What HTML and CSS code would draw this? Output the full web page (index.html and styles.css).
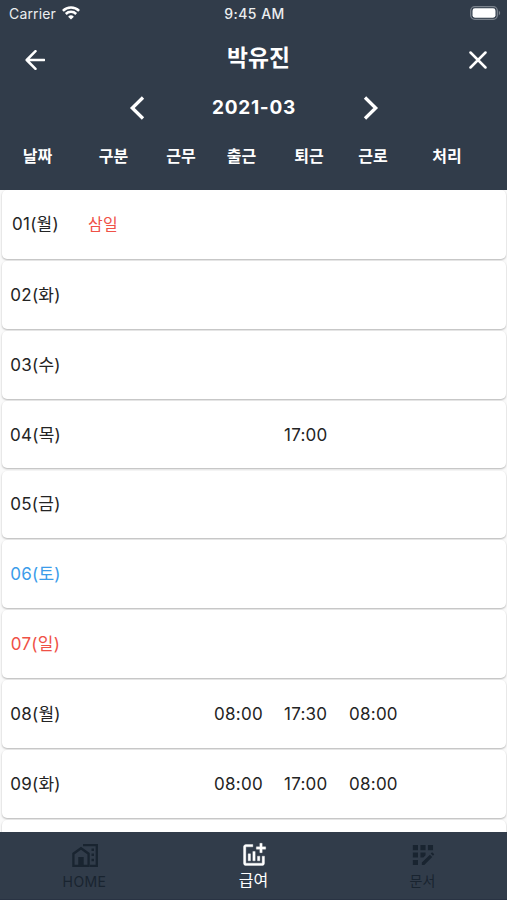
FILE: index.html
```
<!DOCTYPE html>
<html lang="ko">
<head>
<meta charset="utf-8">
<title>박유진</title>
<link rel="stylesheet" href="styles.css">
</head>
<body>
<div class="app">
  <header class="header">
    <div class="status">
      <div class="carrier"><span>Carrier</span>
        <svg width="18" height="14" viewBox="0 0 18 14" fill="none" stroke="#fff" stroke-width="2.5"><path d="M.9 4.8a11.5 11.5 0 0 1 16.2 0M3.8 8a7.4 7.4 0 0 1 10.4 0"/><path d="M9 13.6 6.1 10.7a4.1 4.1 0 0 1 5.8 0z" fill="#fff" stroke="none"/></svg>
      </div>
      <span class="clock">9:45 AM</span>
      <svg class="battery" width="31" height="14" viewBox="0 0 31 14"><rect x=".7" y=".7" width="26.6" height="12.6" rx="4" fill="none" stroke="#7b838d" stroke-width="1.3"/><rect x="2.5" y="2.3" width="23" height="9.4" rx="2.4" fill="#fff"/><path d="M28.8 4.6q2.8 2.4 0 4.8z" fill="#7b838d"/></svg>
    </div>
    <div class="titlebar">
      <svg width="20" height="20" viewBox="0 0 20 20" class="line"><path d="M10.5 1.2 1.7 10l8.8 8.8M2 10h17.3"/></svg>
      <h1>박유진</h1>
      <svg width="18" height="18" viewBox="0 0 18 18" class="line"><path d="m1.5 1.5 15 15m0-15-15 15"/></svg>
    </div>
    <div class="month">
      <svg width="16" height="26" viewBox="0 0 16 26" class="line thick"><path d="M14 2.5 3.3 13 14 23.5"/></svg>
      <span>2021-03</span>
      <svg width="16" height="26" viewBox="0 0 16 26" class="line thick"><path d="M2 2.5 12.7 13 2 23.5"/></svg>
    </div>
    <div class="columns"><span>날짜</span><span>구분</span><span>근무</span><span>출근</span><span>퇴근</span><span>근로</span><span>처리</span></div>
  </header>
  <main class="list">
    <div class="row"><span class="date">01(월)</span><span class="red">삼일</span></div>
    <div class="row"><span class="date">02(화)</span></div>
    <div class="row"><span class="date">03(수)</span></div>
    <div class="row"><span class="date">04(목)</span><span class="out">17:00</span></div>
    <div class="row"><span class="date">05(금)</span></div>
    <div class="row"><span class="date blue">06(토)</span></div>
    <div class="row"><span class="date red">07(일)</span></div>
    <div class="row"><span class="date">08(월)</span><span class="in">08:00</span><span class="out">17:30</span><span class="work">08:00</span></div>
    <div class="row"><span class="date">09(화)</span><span class="in">08:00</span><span class="out">17:00</span><span class="work">08:00</span></div>
    <div class="row"></div>
  </main>
  <nav class="tabs">
    <div class="tab">
      <svg width="28" height="28" viewBox="0 0 28 28"><path fill="none" stroke="currentColor" stroke-width="2.3" d="M12 4.2h13.8v20.6H19M2.4 24.8V12.7L10 7.2l7.6 5.5v12.1z"/><path fill="currentColor" d="M7.3 16h5.4v9H7.3zM20.5 7.5H23V10h-2.5zM20.5 12.6H23v2.5h-2.5zM20.5 17.8H23v2.5h-2.5z"/></svg>
      <span class="latin">HOME</span>
    </div>
    <div class="tab active">
      <svg width="28" height="28" viewBox="0 0 24 24"><path fill="currentColor" stroke="currentColor" stroke-width=".3" d="M22 5v2h-3v3h-2V7h-3V5h3V2h2v3zM19 19H5V5h6V3H5c-1.1 0-2 .9-2 2v14c0 1.1.9 2 2 2h14c1.1 0 2-.9 2-2v-6h-2zM15 13v4h2v-4zM11 17h2V9h-2zM9 17v-6H7v6z"/></svg>
      <span>급여</span>
    </div>
    <div class="tab">
      <svg width="28" height="28" viewBox="0 0 24 24"><path fill="currentColor" d="M9.8 3.5h4.4v4.4H9.8zM3.3 16.2h4.4v4.4H3.3zM3.3 9.8h4.4v4.4H3.3zM3.3 3.5h4.4v4.4H3.3zM14.2 12.3V9.8H9.8v4.4h2.5zM21.4 11.1l-1.2-1.2c-.2-.2-.5-.2-.7 0l-.9.9 1.9 1.9.9-.9c.2-.2.2-.5 0-.7zM11 18.4v2.2h2.1l6.8-6.9-2-2zM16.2 3.5h4.4v4.4h-4.4z"/></svg>
      <span class="docs">문서</span>
    </div>
  </nav>
</div>
</body>
</html>
```
FILE: styles.css
```
* { box-sizing: border-box; }
body { margin: 0; font-family: Inter, "Noto Sans CJK KR", sans-serif; }
.app { width: 507px; height: 900px; display: flex; flex-direction: column; overflow: hidden; background: #fafafa; }
.header { height: 190px; flex: none; background: #313c4a; color: #fff; }
.status { height: 28px; display: grid; grid-template-columns: 1fr auto 1fr; align-items: center; padding: 0 5px 0 9px; font-size: 14px; line-height: 28px; color: #eceef0; }
.carrier { display: flex; align-items: center; gap: 6px; letter-spacing: .15px; }
.carrier svg { margin-top: -2px; }
.clock { font-size: 14px; font-weight: 500; letter-spacing: .45px; margin-right: 2px; }
.battery { justify-self: end; margin: -2px 1px 0 0; }
.titlebar { height: 62px; display: flex; align-items: center; justify-content: space-between; padding: 1px 20px 0 25px; }
.titlebar h1 { margin: 0; padding: 0 0 3px 3px; font-size: 22.8px; font-weight: 700; line-height: 40px; }
.line { display: block; fill: none; stroke: #fff; stroke-width: 2.5; stroke-linecap: round; stroke-linejoin: round; }
.thick { stroke-width: 3.3; stroke-linecap: butt; stroke-linejoin: miter; }
.month { height: 36px; display: flex; justify-content: space-between; align-items: center; padding: 0 128px 0 129px; font-size: 19px; font-weight: 700; letter-spacing: .75px; line-height: 30px; }
.month span { padding-bottom: 1px; }
.columns { display: grid; grid-template-columns: 75px 77px 58px 63px 72px 56px 92px; height: 60px; line-height: 60px; font-size: 16px; font-weight: 700; text-align: center; }
.list { flex: 1; overflow: hidden; padding: 0 1px 0 2px; }
.row { height: 67.7px; margin-bottom: 2.2px; border-radius: 5px; background: #fff; box-shadow: 0 1px 2px rgba(0,0,0,.28); display: grid; grid-template-columns: 67px 104px 77px 61px 69px 1fr; align-items: center; justify-items: center; font-size: 17px; line-height: 30px; letter-spacing: .25px; color: #242424; }
.row:first-child { height: 68.8px; }
.row > span { grid-row: 1; }
.row .date { grid-column: 1; }
.row .date + .red { grid-column: 2; justify-self: start; margin-left: 19px; font-size: 16px; }
.row .in { grid-column: 3 / 4; margin-left: 54px; }
.row .out { grid-column: 4 / 6; justify-self: start; margin-left: 34px; }
.row .work { grid-column: 5 / 7; justify-self: start; margin-left: 38px; }
.row .blue { color: #3b9cea; }
.row .red { color: #ef5147; }
.tabs { height: 68px; flex: none; display: grid; grid-template-columns: repeat(3, 1fr); background: #313c4a; border-bottom: 1px solid #293343; }
.tab { display: flex; flex-direction: column; align-items: center; padding-top: 9px; color: #192430; font-size: 14px; line-height: 22px; }
.tab svg { display: block; }
.tab .latin { letter-spacing: .4px; margin-top: 2px; }
.tab .docs { margin-top: 1px; }
.tab.active { color: #fff; font-size: 16px; }
```
